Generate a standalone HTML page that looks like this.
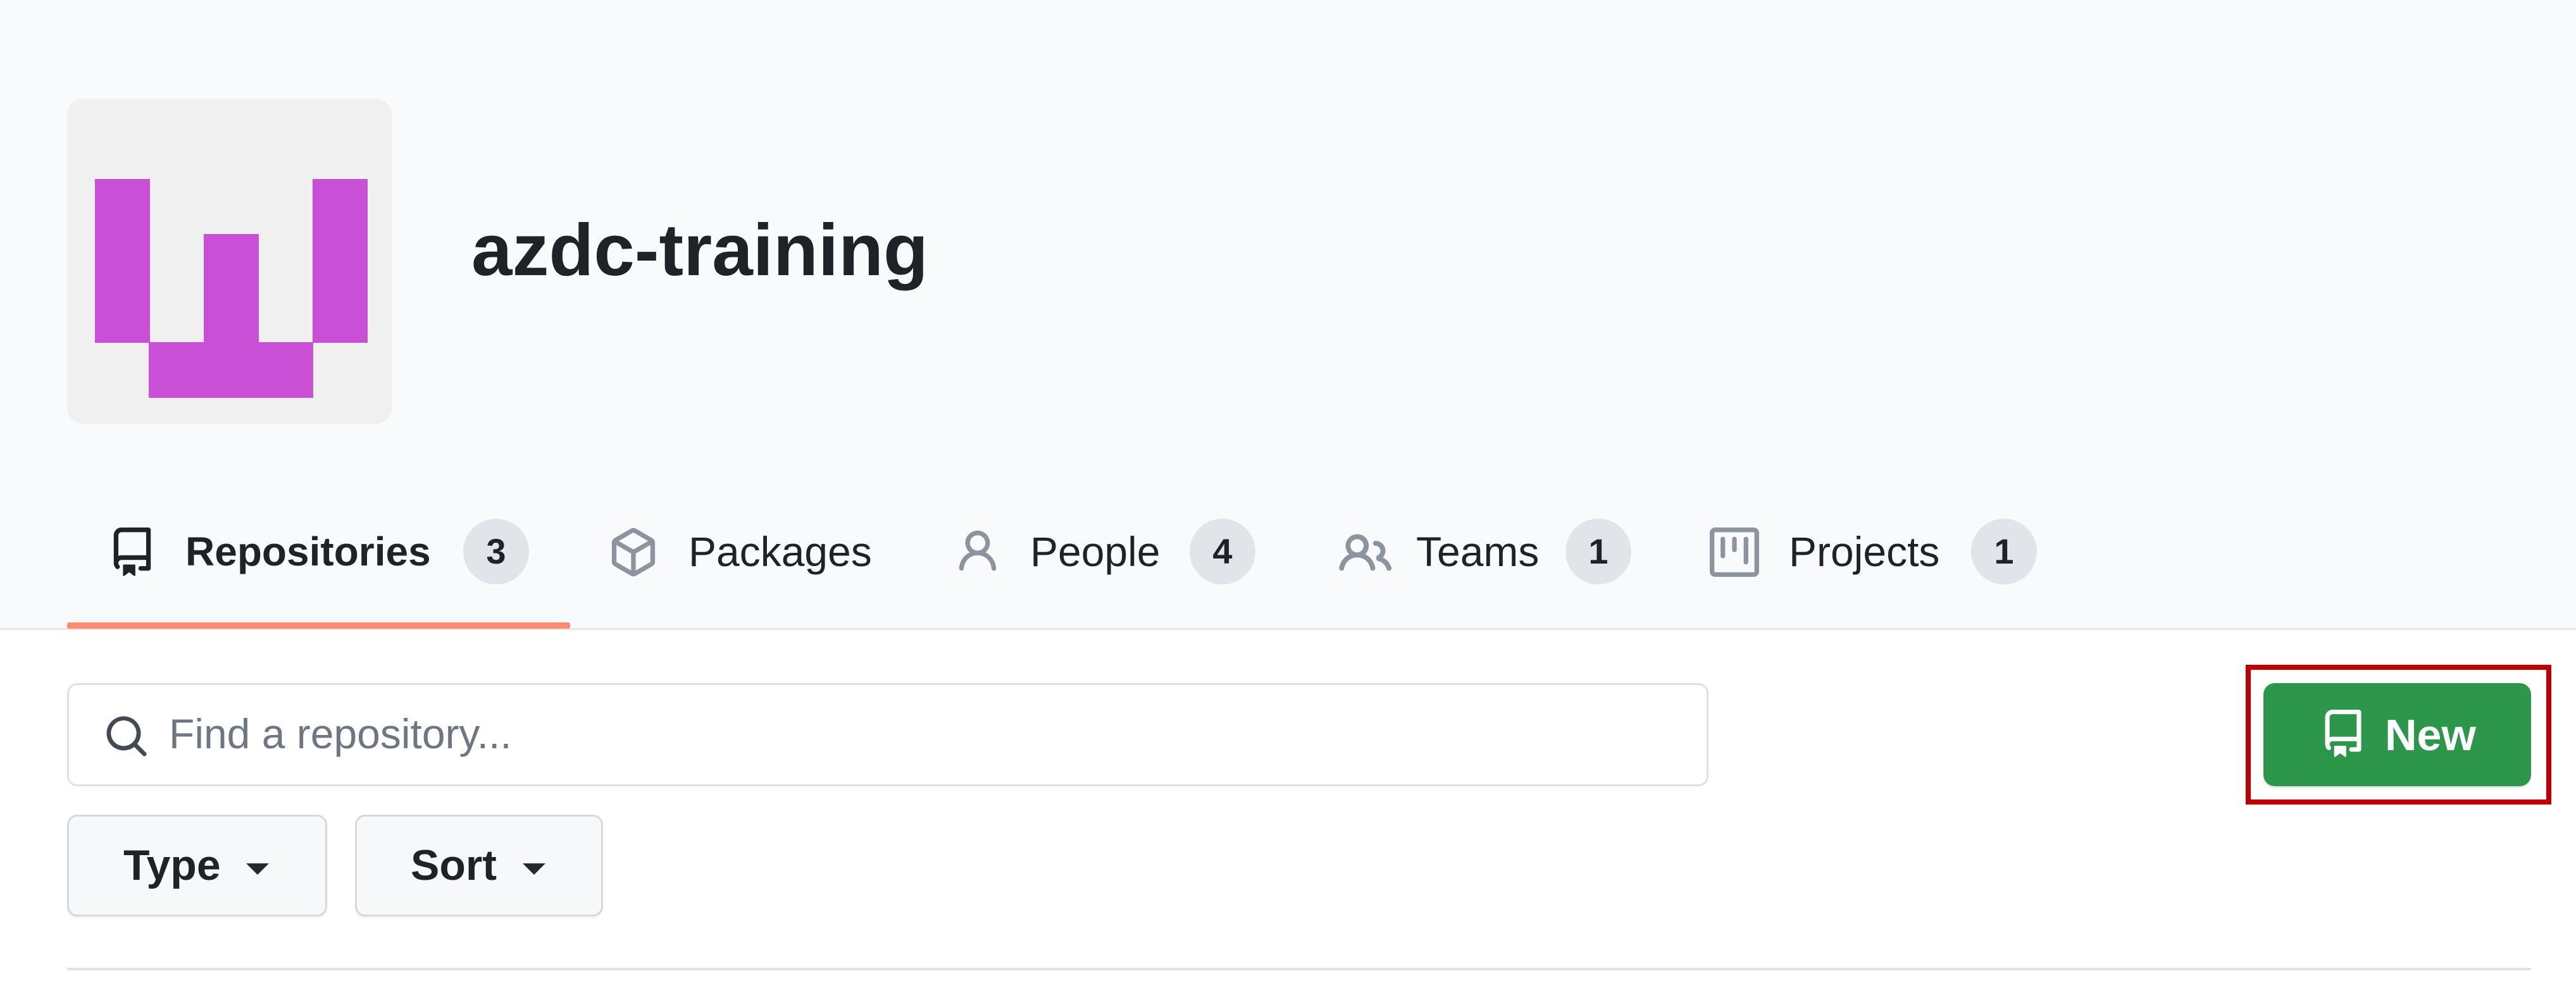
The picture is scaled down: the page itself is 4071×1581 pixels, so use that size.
<!DOCTYPE html>
<html><head><meta charset="utf-8"><style>
html,body{margin:0;padding:0;}
body{width:4071px;height:1581px;position:relative;background:#fff;font-family:"Liberation Sans",sans-serif;color:#1f2328;overflow:hidden;}
.top{position:absolute;left:0;top:0;width:4071px;height:993px;background:#f9fafb;border-bottom:3px solid #e6e9ec;}
.abs{position:absolute;}
.av{left:106px;top:156px;width:514px;height:514px;background:#f0f0f0;border-radius:26px;}
.px{position:absolute;background:#c94fd6;}
.title{left:745px;top:320px;font-size:116px;font-weight:bold;line-height:150px;color:#1f2328;}
.tab{position:absolute;top:832px;font-size:66px;line-height:80px;color:#1f2328;white-space:nowrap;}
.badge{position:absolute;top:820px;width:104px;height:104px;border-radius:52px;background:#e1e4e8;font-size:56px;font-weight:bold;line-height:104px;text-align:center;color:#1f2328;}
.ic{position:absolute;top:834px;}
.uline{left:106px;top:984px;width:795px;height:10px;background:#fd8c73;border-radius:3px;}
.search{left:106px;top:1080px;width:2588px;height:157px;border:3px solid #dde1e5;border-radius:16px;background:#fff;}
.ph{left:267px;top:1120px;font-size:66px;line-height:80px;color:#6e7781;}
.btn{position:absolute;top:1288px;height:155px;border:3px solid #d6dade;border-radius:16px;background:#f6f8fa;box-shadow:0 3px 0 rgba(31,35,40,0.04);}
.bt{position:absolute;top:1328px;font-size:68px;font-weight:bold;line-height:80px;color:#1f2328;}
.caret{position:absolute;top:1365px;width:0;height:0;border-left:18px solid transparent;border-right:18px solid transparent;border-top:18px solid #24292f;}
.red{left:3549px;top:1051px;width:467px;height:205px;border:8px solid #c00000;}
.new{left:3577px;top:1080px;width:423px;height:163px;background:#2c974b;border-radius:18px;box-shadow:0 3px 0 rgba(31,35,40,0.1);}
.newt{left:3769px;top:1122px;font-size:70px;font-weight:bold;line-height:80px;color:#fff;}
.hr{left:106px;top:1530px;width:3894px;height:4px;background:#dde1e5;}
</style></head><body>
<div class="top"></div>
<div class="abs av">
 <div class="px" style="left:44px;top:127px;width:87px;height:259px"></div>
 <div class="px" style="left:216px;top:214px;width:87px;height:172px"></div>
 <div class="px" style="left:388px;top:127px;width:87px;height:259px"></div>
 <div class="px" style="left:129px;top:385px;width:260px;height:88px"></div>
</div>
<div class="abs title">azdc-training</div>

<svg class="ic" style="left:170px" width="78" height="78" viewBox="0 0 16 16"><path fill="#1f2328" d="M2 2.5A2.5 2.5 0 0 1 4.5 0h8.75a.75.75 0 0 1 .75.75v12.5a.75.75 0 0 1-.75.75h-2.5a.75.75 0 0 1 0-1.5h1.75v-2h-8a1 1 0 0 0-.714 1.7.75.75 0 1 1-1.072 1.05A2.495 2.495 0 0 1 2 11.5Zm10.5-1h-8a1 1 0 0 0-1 1v6.708A2.486 2.486 0 0 1 4.5 9h8ZM5 12.25a.25.25 0 0 1 .25-.25h3.5a.25.25 0 0 1 .25.25v3.25a.25.25 0 0 1-.4.2l-1.45-1.087a.249.249 0 0 0-.3 0L5.4 15.7a.25.25 0 0 1-.4-.2Z"/></svg>
<div class="tab" style="left:293px;font-weight:bold;font-size:64px">Repositories</div>
<div class="badge" style="left:732px">3</div>

<svg class="ic" style="left:962px" width="78" height="78" viewBox="0 0 16 16"><path fill="#8c959f" d="m8.878.392 5.25 3.045c.54.314.872.89.872 1.514v6.098a1.75 1.75 0 0 1-.872 1.514l-5.25 3.045a1.75 1.75 0 0 1-1.756 0l-5.25-3.045A1.75 1.75 0 0 1 1 11.049V4.951c0-.624.332-1.201.872-1.514L7.122.392a1.75 1.75 0 0 1 1.756 0ZM7.875 1.69l-4.63 2.685L8 7.133l4.755-2.758-4.63-2.685a.248.248 0 0 0-.25 0ZM2.5 5.677v5.372c0 .09.047.171.125.216l4.625 2.683V8.432Zm6.25 8.271 4.625-2.683a.25.25 0 0 0 .125-.216V5.677L8.75 8.432Z"/></svg>
<div class="tab" style="left:1088px">Packages</div>

<svg class="ic" style="left:1506px" width="78" height="78" viewBox="0 0 16 16"><path fill="#8c959f" d="M10.561 8.073a6.005 6.005 0 0 1 3.432 5.142.75.75 0 1 1-1.498.07 4.5 4.5 0 0 0-8.99 0 .75.75 0 0 1-1.498-.07 6.004 6.004 0 0 1 3.431-5.142 3.999 3.999 0 1 1 5.123 0ZM10.5 5a2.5 2.5 0 1 0-5 0 2.5 2.5 0 0 0 5 0Z"/></svg>
<div class="tab" style="left:1628px">People</div>
<div class="badge" style="left:1880px">4</div>

<svg class="ic" style="left:2116px" width="84" height="84" viewBox="0 0 16 16"><path fill="#8c959f" d="M2 5.5a3.5 3.5 0 1 1 5.898 2.549 5.508 5.508 0 0 1 3.034 4.084.75.75 0 1 1-1.482.235 4 4 0 0 0-7.9 0 .75.75 0 0 1-1.482-.236A5.507 5.507 0 0 1 3.102 8.050 3.493 3.493 0 0 1 2 5.5ZM11 4a3.001 3.001 0 0 1 2.22 5.018 5.01 5.01 0 0 1 2.56 3.012.749.749 0 0 1-.885.954.752.752 0 0 1-.549-.514 3.507 3.507 0 0 0-2.522-2.372.75.75 0 0 1-.574-.73v-.352a.75.75 0 0 1 .416-.672A1.5 1.5 0 0 0 11 5.5.75.75 0 0 1 11 4Zm-5.5-.5a2 2 0 1 0-.001 3.999A2 2 0 0 0 5.5 3.5Z"/></svg>
<div class="tab" style="left:2238px">Teams</div>
<div class="badge" style="left:2474px">1</div>

<svg class="ic" style="left:2702px" width="78" height="78" viewBox="0 0 16 16"><path fill="#8c959f" d="M1.75 0h12.5C15.216 0 16 .784 16 1.75v12.5A1.75 1.75 0 0 1 14.25 16H1.75A1.75 1.75 0 0 1 0 14.25V1.75C0 .784.784 0 1.75 0ZM1.5 1.75v12.5c0 .138.112.25.25.25h12.5a.25.25 0 0 0 .25-.25V1.75a.25.25 0 0 0-.25-.25H1.75a.25.25 0 0 0-.25.25ZM11.75 3a.75.75 0 0 1 .75.75v7.5a.75.75 0 0 1-1.5 0v-7.5a.75.75 0 0 1 .75-.75Zm-8.25.75a.75.75 0 0 1 1.5 0v5.5a.75.75 0 0 1-1.5 0ZM8 3a.75.75 0 0 1 .75.75v3.5a.75.75 0 0 1-1.5 0v-3.5A.75.75 0 0 1 8 3Z"/></svg>
<div class="tab" style="left:2827px">Projects</div>
<div class="badge" style="left:3115px">1</div>

<div class="abs uline"></div>

<div class="abs search"></div>
<svg class="abs" style="left:164px;top:1128px" width="72" height="72" viewBox="0 0 16 16"><path fill="#424a53" d="M10.68 11.74a6 6 0 0 1-7.922-8.982 6 6 0 0 1 8.982 7.922l3.04 3.04a.749.749 0 0 1-.326 1.275.749.749 0 0 1-.734-.215ZM11.5 7a4.499 4.499 0 1 0-8.997 0A4.499 4.499 0 0 0 11.5 7Z"/></svg>
<div class="abs ph">Find a repository...</div>

<div class="btn" style="left:106px;width:405px"></div>
<div class="bt" style="left:195px">Type</div>
<div class="caret" style="left:389px"></div>
<div class="btn" style="left:561px;width:386px"></div>
<div class="bt" style="left:649px">Sort</div>
<div class="caret" style="left:826px"></div>

<div class="abs red"></div>
<div class="abs new"></div>
<svg class="abs" style="left:3665px;top:1122px" width="76" height="76" viewBox="0 0 16 16"><path fill="#fff" d="M2 2.5A2.5 2.5 0 0 1 4.5 0h8.75a.75.75 0 0 1 .75.75v12.5a.75.75 0 0 1-.75.75h-2.5a.75.75 0 0 1 0-1.5h1.75v-2h-8a1 1 0 0 0-.714 1.7.75.75 0 1 1-1.072 1.05A2.495 2.495 0 0 1 2 11.5Zm10.5-1h-8a1 1 0 0 0-1 1v6.708A2.486 2.486 0 0 1 4.5 9h8ZM5 12.25a.25.25 0 0 1 .25-.25h3.5a.25.25 0 0 1 .25.25v3.25a.25.25 0 0 1-.4.2l-1.45-1.087a.249.249 0 0 0-.3 0L5.4 15.7a.25.25 0 0 1-.4-.2Z"/></svg>
<div class="abs newt">New</div>

<div class="abs hr"></div>
</body></html>
